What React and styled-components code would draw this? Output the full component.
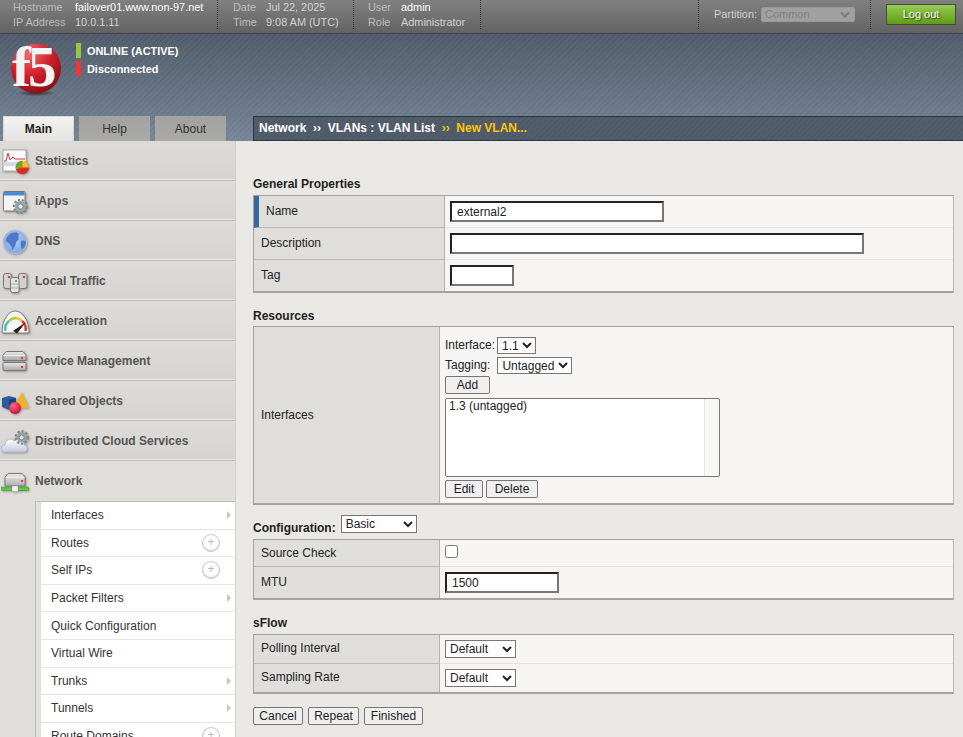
import React from "react";
import styled, { createGlobalStyle } from "styled-components";

const Global = createGlobalStyle`
  html, body { margin: 0; padding: 0; background: #e9e8e4; height: 100%; overflow: hidden; }
  body { font-family: "Liberation Sans", Arial, sans-serif; font-size: 12px; color: #222; }
  * { box-sizing: border-box; }
`;

const Page = styled.div`width: 963px; height: 737px; overflow: hidden; display: flex; flex-direction: column;`;

const TopBar = styled.div`
  height: 34px; flex: none; display: flex; align-items: flex-start;
  background: linear-gradient(#808080, #636363);
  border-bottom: 1px solid #3f4247;
  font-size: 10.9px; line-height: 15px;
`;
const InfoBlock = styled.div`
  width: ${p => p.$w}px; height: 29px; flex: none;
  padding: 0 0 0 ${p => p.$pl}px;
  display: grid; grid-template-columns: ${p => p.$c}px 1fr; align-content: start;
  border-right: 1px dotted #333;
`;
const InfoKey = styled.div`color: #bdbdbd;`;
const InfoVal = styled.div`color: ${p => p.$bright ? "#fff" : "#d2d2d2"}; white-space: nowrap;`;
const Spacer = styled.div`flex: 1; height: 29px; border-right: 1px dotted #333;`;
const PartitionBlock = styled.div`
  width: 172px; height: 29px; flex: none; display: flex; align-items: center; padding-left: 15px;
  border-right: 1px dotted #333; color: #d0d0d0;
`;
const PartitionBox = styled.div`
  width: 94px; height: 15px; margin-left: 4px; border-radius: 2px; background: #a0a0a0; border: 1px solid #989898;
  color: #7f7f7f; font-size: 11px; line-height: 13px; padding: 0 4px 0 3px; display: flex; justify-content: space-between; align-items: center;
`;
const LogoutCell = styled.div`flex: none; width: 92px; height: 29px; padding: 4px 0 0 15px;`;
const Logout = styled.div`
  width: 70px; height: 21px; background: linear-gradient(#94cb54, #5f9c12); border: 1px solid #454c3b;
  color: #fff; font-size: 11px; line-height: 19px; text-align: center; text-shadow: 1px 1px 1px #2d3a12;
`;

const Banner = styled.div`
  height: 107px; flex: none;
  background:
    repeating-linear-gradient(135deg, rgba(255,255,255,0.025) 0 2px, rgba(0,0,0,0.025) 2px 4px),
    linear-gradient(#515d6b, #778799);
  display: flex; flex-direction: column;
`;
const BannerTop = styled.div`flex: 1; display: flex; padding: 9px 0 0 10px;`;
const Logo = styled.div`width: 52px; height: 56px; flex: none;`;
const Statuses = styled.div`margin-left: 14px; display: flex; flex-direction: column; gap: 3px;`;
const Status = styled.div`
  display: flex; align-items: center; height: 15px; color: #fff; font-size: 10.9px; font-weight: bold;
  &::before { content: ""; width: 5px; height: 15px; background: ${p => p.$c}; margin-right: 6px; }
`;
const TabRow = styled.div`height: 25px; display: flex; align-items: flex-end; flex: none;`;
const Tabs = styled.div`display: flex; gap: 5px; padding-left: 3px; width: 253px; flex: none; align-self: flex-end;`;
const Tab = styled.div`
  width: 71px; height: 25px; text-align: center; line-height: 24px; font-size: 12px;
  border: 1px solid ${p => p.$on ? "#d8d8d4" : "#a3a6a5"}; border-bottom: none;
  background: ${p => p.$on ? "linear-gradient(#f3f3f0, #e4e3df)" : "linear-gradient(#a2a2a0, #a9aaa6)"};
  color: ${p => p.$on ? "#222" : "#333"}; font-weight: ${p => p.$on ? "bold" : "normal"};
`;
const Crumb = styled.div`
  flex: 1; height: 25px; background: repeating-linear-gradient(135deg, #4f5a68 0 2px, #535e6c 2px 4px);
  border: 1px solid #32363b; border-right: none; color: #fff; font-size: 12px; font-weight: bold; line-height: 22px; padding-left: 5px; white-space: pre;
`;
const CrumbHot = styled.span`color: #fcc60f;`;

const Body = styled.div`flex: 1; display: flex; min-height: 0;`;
const Side = styled.div`width: 236px; flex: none; background: #dfdeda; border-right: 1px solid #cfcfcb; overflow: hidden;`;
const NavItem = styled.div`
  height: 40px; display: flex; align-items: center; color: #555; font-size: 12px; font-weight: bold;
  background: ${p => p.$open ? "#dfdeda" : "linear-gradient(#dcdbd7, #d5d4d0)"};
  border-bottom: ${p => p.$open ? "none" : "1px solid #bcbcb8"};
  box-shadow: ${p => p.$open ? "none" : "inset 0 -1px 0 #e8e8e6"};
`;
const NavIcon = styled.div`
  width: 35px; height: 30px; flex: none;
  svg { display: block; filter: drop-shadow(1px 1px 1px rgba(0, 0, 0, 0.3)); }
`;
const Sub = styled.div`
  margin-left: 35px; background: #fff; border-left: 1px solid #bdbdbb; border-top: 1px solid #bdbdbb;
`;
const SubInner = styled.div`border-left: 5px solid #dfdfe0;`;
const SubItem = styled.div`
  height: 27.6px; display: flex; align-items: center; justify-content: space-between; padding: 0 2px 0 10px;
  font-size: 12px; color: #333; border-bottom: 1px solid #e6e6e6;
`;
const Arrow = styled.span`width: 0; height: 0; border-left: 4px solid #c5c5c5; border-top: 4px solid transparent; border-bottom: 4px solid transparent; margin-right: 2px;`;
const Plus = styled.span`
  width: 18px; height: 18px; border-radius: 50%; border: 1px solid #c6c6c6; box-shadow: inset 0 -1px 1px #ccc; color: #bbb; font-size: 12px; line-height: 15px;
  text-align: center; margin-right: 13px;
`;

const Main = styled.div`flex: 1; padding: 35px 9px 0 17px; min-width: 0;`;
const SectionTitle = styled.div`
  font-size: 12px; font-weight: bold; color: #222; line-height: 14px; height: ${p => p.$h || 19}px; padding-top: ${p => p.$pt || 0}px;
`;
const Table = styled.div`border: 1px solid #a3a3a1; border-right-color: #b8b8b6; border-bottom: 2px solid #a3a3a1; background: #f6f5f3;`;
const Row = styled.div`
  display: grid; grid-template-columns: ${p => p.$lab}px 1fr; height: ${p => p.$h}px;
  &:not(:last-child) > :first-child { border-bottom: 1px solid #b9b9b7; }
  &:not(:last-child) > :last-child { border-bottom: 1px solid #e2e2e0; }
`;
const Label = styled.div`
  background: #dfdeda; border-right: 1px solid #b1b1af; display: flex; align-items: center;
  padding: 0 0 ${p => p.$pb ?? 2}px 7px; font-size: 12px; color: #222;
  ${p => p.$req ? "border-left: 5px solid #34689f;" : ""}
`;
const Value = styled.div`display: flex; align-items: center; padding-left: 5px;`;
const TextBox = styled.input`
  width: ${p => p.$w}px; height: 21px; border: 2px solid #222; border-right-color: #777; border-bottom-color: #777;
  font: 12px "Liberation Sans", Arial, sans-serif; color: #222; padding: 0 5px; background: #fff; outline: none; border-radius: 0;
`;
const Select = styled.select`
  width: ${p => p.$w}px; height: ${p => p.$h || 18}px; font: 12px "Liberation Sans", Arial, sans-serif; color: #222; background: #fff;
  border: 1px solid #767676; border-radius: 0; padding: 0; outline: none;
`;
const Btn = styled.button`
  height: 18px; padding: 0; width: ${p => p.$w}px; font: 12px "Liberation Sans", Arial, sans-serif; color: #222; background: #efefef;
  border: 1px solid #767676; border-radius: 2px; flex: none;
`;
const Stack = styled.div`padding: 8px 0 0 5px; display: flex; flex-direction: column; align-items: flex-start;`;
const Line = styled.div`display: flex; align-items: center; font-size: 12px; height: 20px; gap: ${p => p.$g}px;`;
const AddWrap = styled.div`margin-top: 1px;`;
const ListBox = styled.div`
  width: 275px; height: 79px; margin-top: 4px; border: 1px solid #767676; border-radius: 2px;
  background: linear-gradient(to left, #f8f8f7 14px, #e6e6e6 14px, #e6e6e6 15px, #fff 15px);
  font-size: 12px; padding: 0 3px; line-height: 14px;
`;
const Row2 = styled.div`display: flex; gap: 3px; margin-top: 3px;`;
const ConfigRow = styled.div`display: flex; align-items: flex-start; height: 34px; padding-top: 10px; font-size: 12px; gap: 5px;`;
const ConfigLabel = styled.span`font-weight: bold; line-height: 14px; margin-top: 6px;`;
const Check = styled.input`width: 13px; height: 13px; margin: 0 0 3px 0;`;
const Actions = styled.div`display: flex; gap: 5px; margin-top: 13px;`;
const LogoSvg = styled.svg`display: block; overflow: visible;`;
const LogoText = styled.text`
  font-family: "Liberation Serif", "Times New Roman", serif; font-weight: bold; font-size: 57px; letter-spacing: -3px; fill: #f4f4f4;
`;

const F5 = () => (
  <LogoSvg width="52" height="56" viewBox="0 0 52 56">
    <defs>
      <radialGradient id="f5g" cx="0.35" cy="0.2" r="0.9">
        <stop offset="0" stopColor="#ee6a70" /><stop offset="0.5" stopColor="#cf1f2b" /><stop offset="1" stopColor="#7e0d14" />
      </radialGradient>
      <radialGradient id="f5s" cx="0.5" cy="0.5" r="0.5">
        <stop offset="0" stopColor="#222" stopOpacity="0.8" /><stop offset="1" stopColor="#222" stopOpacity="0" />
      </radialGradient>
    </defs>
    <ellipse cx="26" cy="50" rx="19" ry="3.500" fill="url(#f5s)" />
    <circle cx="26" cy="25.500" r="25" fill="url(#f5g)" />
    <LogoText x="2" y="43">f5</LogoText>
  </LogoSvg>
);

const Gear = ({ cx, cy, r }) => (
  <g>
    <circle cx={cx} cy={cy} r={r} fill="none" stroke="#7f888a" strokeWidth="2.500" strokeDasharray="2.200 1.700" />
    <circle cx={cx} cy={cy} r={r - 1} fill="#9aa3a5" />
    <circle cx={cx} cy={cy} r={r / 2.500} fill="#e4e6e6" stroke="#6f7779" strokeWidth="0.800" />
  </g>
);

const icons = {
  stats: (
    <svg width="31" height="30" viewBox="0 0 31 30">
      <rect x="3" y="4" width="23" height="21" fill="#f9f9f9" stroke="#aaa" />
      <rect x="4" y="16" width="21" height="4" fill="#cfdcef" />
      <path d="M4 15 L6 15 L8 7 L10 14 L13 11 L15 13 L25 13" fill="none" stroke="#cf3a3a" />
      <circle cx="22.300" cy="21.500" r="6.700" fill="#d92b2b" />
      <path d="M22.300 21.500 L22.300 14.800 A6.700 6.700 0 0 0 16 23.500 Z" fill="#74a928" />
      <path d="M22.300 21.500 L22.300 14.800 A6.700 6.700 0 0 1 29 21.500 Z" fill="#f0c224" />
    </svg>
  ),
  iapps: (
    <svg width="31" height="30" viewBox="0 0 31 30">
      <rect x="3.500" y="5.500" width="21.500" height="19.500" rx="1" fill="#f3f3f3" stroke="#777" />
      <rect x="4" y="6" width="20.500" height="3.500" fill="#4a8ad4" />
      <Gear cx={20.500} cy={20.500} r={6.500} />
    </svg>
  ),
  dns: (
    <svg width="31" height="30" viewBox="0 0 31 30">
      <defs>
        <radialGradient id="dnsg" cx="0.5" cy="0.4" r="0.65">
          <stop offset="0" stopColor="#b7ccf3" /><stop offset="1" stopColor="#7b9fe0" />
        </radialGradient>
      </defs>
      <circle cx="15" cy="16" r="11.700" fill="url(#dnsg)" stroke="#a9bce0" />
      <path d="M9 9 C12 6 17 6 19 8 C17 12 21 13 16 16 C16 20 13 23 12 24 C12 20 10 18 7 16 C5 14 6 12 9 9 Z" fill="#4e78c9" />
      <path d="M21 15 C24 14 26 15 26 17 C25 21 23 23 22 23 C21 20 20 18 21 15 Z" fill="#4e78c9" />
    </svg>
  ),
  local: (
    <svg width="31" height="30" viewBox="0 0 31 30">
      <rect x="3.500" y="7.500" width="8" height="15" rx="2" fill="#d0d0d0" stroke="#777" />
      <rect x="18.500" y="7.500" width="8.500" height="15" rx="2" fill="#d0d0d0" stroke="#777" />
      <rect x="10.500" y="11.500" width="8.500" height="15" rx="2" fill="#e2e2e2" stroke="#777" />
      <rect x="8" y="10" width="2" height="2" fill="#e33" />
      <rect x="23" y="10" width="2" height="2" fill="#e33" />
      <rect x="15" y="14" width="2" height="2" fill="#5b5" />
      <path d="M11 18 H18.500 M11 22 H18.500" stroke="#aaa" />
    </svg>
  ),
  accel: (
    <svg width="31" height="30" viewBox="0 0 31 30">
      <path d="M2 27 C2 13 9 5 15 5 C22 5 29 13 29 27 Z" fill="#f6f6f6" stroke="#777" />
      <path d="M5.500 25 A10 10 0 0 1 9 15" fill="none" stroke="#4cc0c0" strokeWidth="2.500" />
      <path d="M9 15 A10 10 0 0 1 16 12" fill="none" stroke="#a9cd35" strokeWidth="2.500" />
      <path d="M16 12 A10 10 0 0 1 22 15" fill="none" stroke="#eec62c" strokeWidth="2.500" />
      <path d="M22 15 A10 10 0 0 1 25.500 25" fill="none" stroke="#d83a30" strokeWidth="2.500" />
      <path d="M13 25 L26 16 L17 27.500 Z" fill="#222" />
    </svg>
  ),
  device: (
    <svg width="31" height="30" viewBox="0 0 31 30">
      <defs>
        <linearGradient id="devg" x1="0" y1="0" x2="0" y2="1">
          <stop offset="0" stopColor="#e8e8e8" /><stop offset="1" stopColor="#a9a9a9" />
        </linearGradient>
      </defs>
      <path d="M3 9 L6 5.500 H23 L26 9 V14.500 H3 Z" fill="url(#devg)" stroke="#777" />
      <rect x="3" y="16.500" width="23" height="8" rx="1" fill="url(#devg)" stroke="#777" />
      <path d="M3.500 9.500 H25.500" stroke="#eee" />
      <rect x="21" y="11" width="2" height="2" fill="#e33" />
      <rect x="21" y="20" width="2" height="2" fill="#e33" />
    </svg>
  ),
  shared: (
    <svg width="31" height="30" viewBox="0 0 31 30">
      <defs>
        <radialGradient id="shg" cx="0.35" cy="0.3" r="0.7">
          <stop offset="0" stopColor="#f86a83" /><stop offset="1" stopColor="#cf1238" />
        </radialGradient>
      </defs>
      <path d="M2 12 L9 10 L16 12 L16 22 L9 24 L2 21 Z" fill="#2c5a9c" />
      <path d="M9 14 L16 12 L16 22 L9 24 Z" fill="#1d3f78" />
      <path d="M21.700 6 L29 22 L14 22 Z" fill="#f0b229" />
      <circle cx="15" cy="22" r="6" fill="url(#shg)" />
    </svg>
  ),
  cloud: (
    <svg width="31" height="30" viewBox="0 0 31 30">
      <defs>
        <linearGradient id="clg" x1="0" y1="0" x2="0" y2="1">
          <stop offset="0" stopColor="#fefefe" /><stop offset="1" stopColor="#c6c6e4" />
        </linearGradient>
      </defs>
      <path d="M5 26 C0 26 0 19 5 19 C5 14 11 11 14 15 C18 12 24 14 24 19 C28 20 28 26 24 26 Z" fill="url(#clg)" stroke="#bcbcc8" />
      <Gear cx={21.700} cy={11.500} r={6} />
    </svg>
  ),
  network: (
    <svg width="31" height="30" viewBox="0 0 31 30">
      <defs>
        <linearGradient id="netg" x1="0" y1="0" x2="0" y2="1">
          <stop offset="0" stopColor="#eaeaea" /><stop offset="1" stopColor="#b0b0b0" />
        </linearGradient>
      </defs>
      <path d="M5 11 L8 7.500 H22 L25 11 V20 H5 Z" fill="url(#netg)" stroke="#777" />
      <path d="M5.500 11.500 H24.500" stroke="#f4f4f4" />
      <rect x="21" y="14" width="2" height="2" fill="#e33" />
      <rect x="1.500" y="21" width="27" height="3.500" fill="#5bc93f" stroke="#3d8f2b" strokeWidth="0.500" />
      <rect x="12" y="20" width="6" height="5.500" fill="#f4f4f4" stroke="#999" strokeWidth="0.500" />
    </svg>
  ),
};

const nav = [
  ["stats", "Statistics"], ["iapps", "iApps"], ["dns", "DNS"], ["local", "Local Traffic"], ["accel", "Acceleration"],
  ["device", "Device Management"], ["shared", "Shared Objects"], ["cloud", "Distributed Cloud Services"],
];
const subs = [
  ["Interfaces", "a"], ["Routes", "p"], ["Self IPs", "p"], ["Packet Filters", "a"], ["Quick Configuration"], ["Virtual Wire"],
  ["Trunks", "a"], ["Tunnels", "a"], ["Route Domains", "p"],
];

export default function App() {
  return (
    <Page>
      <Global />
      <TopBar>
        <InfoBlock $w={218} $pl={13} $c={62}>
          <InfoKey>Hostname</InfoKey><InfoVal $bright>failover01.www.non-97.net</InfoVal>
          <InfoKey>IP Address</InfoKey><InfoVal>10.0.1.11</InfoVal>
        </InfoBlock>
        <InfoBlock $w={136} $pl={15} $c={33}>
          <InfoKey>Date</InfoKey><InfoVal>Jul 22, 2025</InfoVal>
          <InfoKey>Time</InfoKey><InfoVal>9:08 AM (UTC)</InfoVal>
        </InfoBlock>
        <InfoBlock $w={127} $pl={14} $c={33}>
          <InfoKey>User</InfoKey><InfoVal $bright>admin</InfoVal>
          <InfoKey>Role</InfoKey><InfoVal>Administrator</InfoVal>
        </InfoBlock>
        <Spacer />
        <PartitionBlock>
          Partition:
          <PartitionBox>Common
            <svg width="10" height="7" viewBox="0 0 10 7"><path d="M1 1.500 L5 5.500 L9 1.500" fill="none" stroke="#7a7a7a" strokeWidth="2" /></svg>
          </PartitionBox>
        </PartitionBlock>
        <LogoutCell><Logout>Log out</Logout></LogoutCell>
      </TopBar>
      <Banner>
        <BannerTop>
          <Logo><F5 /></Logo>
          <Statuses>
            <Status $c="#9ac341">ONLINE (ACTIVE)</Status>
            <Status $c="#f5333a">Disconnected</Status>
          </Statuses>
        </BannerTop>
        <TabRow>
          <Tabs>
            <Tab $on>Main</Tab><Tab>Help</Tab><Tab>About</Tab>
          </Tabs>
          <Crumb>Network  ››  VLANs : VLAN List  <CrumbHot>››  New VLAN...</CrumbHot></Crumb>
        </TabRow>
      </Banner>
      <Body>
        <Side>
          {nav.map(([k, t]) => (
            <NavItem key={k}><NavIcon>{icons[k]}</NavIcon>{t}</NavItem>
          ))}
          <NavItem $open><NavIcon>{icons.network}</NavIcon>Network</NavItem>
          <Sub>
            <SubInner>
              {subs.map(([t, m]) => (
                <SubItem key={t}>{t}{m === "a" && <Arrow />}{m === "p" && <Plus>+</Plus>}</SubItem>
              ))}
            </SubInner>
          </Sub>
        </Side>
        <Main>
          <SectionTitle $h={19} $pt={1}>General Properties</SectionTitle>
          <Table>
            <Row $lab={191} $h={32}><Label $req>Name</Label><Value><TextBox $w={214} defaultValue="external2" /></Value></Row>
            <Row $lab={191} $h={32}><Label>Description</Label><Value><TextBox $w={414} /></Value></Row>
            <Row $lab={191} $h={31}><Label>Tag</Label><Value><TextBox $w={64} /></Value></Row>
          </Table>
          <SectionTitle $h={33} $pt={16}>Resources</SectionTitle>
          <Table>
            <Row $lab={186} $h={176}>
              <Label $pb={0}>Interfaces</Label>
              <Stack>
                <Line $g={2}>Interface: <Select $w={39} $h={17} defaultValue="1.1"><option>1.1</option></Select></Line>
                <Line $g={7}>Tagging: <Select $w={75} $h={17} defaultValue="Untagged"><option>Untagged</option></Select></Line>
                <AddWrap><Btn $w={45}>Add</Btn></AddWrap>
                <ListBox>1.3 (untagged)</ListBox>
                <Row2><Btn $w={38}>Edit</Btn><Btn $w={52}>Delete</Btn></Row2>
              </Stack>
            </Row>
          </Table>
          <ConfigRow>
            <ConfigLabel>Configuration:</ConfigLabel>
            <Select $w={76} $h={18} defaultValue="Basic"><option>Basic</option></Select>
          </ConfigRow>
          <Table>
            <Row $lab={186} $h={27}><Label $pb={0}>Source Check</Label><Value><Check type="checkbox" /></Value></Row>
            <Row $lab={186} $h={31}><Label>MTU</Label><Value><TextBox $w={114} defaultValue="1500" /></Value></Row>
          </Table>
          <SectionTitle $h={34} $pt={16}>sFlow</SectionTitle>
          <Table>
            <Row $lab={186} $h={29}><Label>Polling Interval</Label><Value><Select $w={71} defaultValue="Default"><option>Default</option></Select></Value></Row>
            <Row $lab={186} $h={28}><Label>Sampling Rate</Label><Value><Select $w={71} defaultValue="Default"><option>Default</option></Select></Value></Row>
          </Table>
          <Actions><Btn $w={50}>Cancel</Btn><Btn $w={51}>Repeat</Btn><Btn $w={59}>Finished</Btn></Actions>
        </Main>
      </Body>
    </Page>
  );
}
